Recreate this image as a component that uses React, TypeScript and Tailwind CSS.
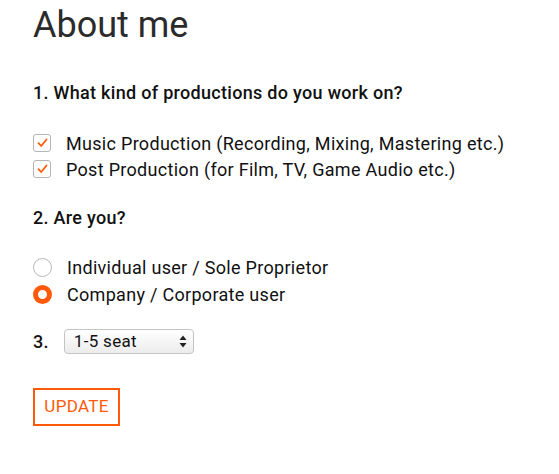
import React from 'react';

const Check: React.FC = () => (
    <span className="flex h-[18px] w-[18px] items-center justify-center rounded-[3px] border border-[#b5b5b5] bg-white">
        <svg width="11" height="10" viewBox="0 0 11 10" fill="none">
            <path d="M1.5 5.2 L4.2 8 L9.5 1.5" stroke="#ff5a0a" strokeWidth="1.8" strokeLinecap="round" strokeLinejoin="round" />
        </svg>
    </span>
);

const Radio: React.FC<{ checked?: boolean }> = ({ checked }) =>
    checked ? (
        <span className="h-[19px] w-[19px] rounded-full border-[5px] border-[#ff5a0a] bg-white" />
    ) : (
        <span className="h-[19px] w-[19px] rounded-full border border-[#b8b8b8] bg-white" />
    );

const App: React.FC = () => {
    return (
        <div className="min-h-[474px] w-[559px] bg-white pl-[33px] pt-[3px] text-[#111] font-['Roboto',sans-serif] tracking-[0.3px]">
            <h1 className="text-[36px] leading-[44px] tracking-normal text-[#2b2b2b]">About me</h1>

            <h2 className="mt-[34px] text-[18px] font-medium leading-[24px]">1. What kind of productions do you work on?</h2>
            <div className="mt-[25px] flex flex-col">
                <label className="flex h-[26px] items-center gap-[15px] text-[18px]">
                    <Check />
                    <span>Music Production (Recording, Mixing, Mastering etc.)</span>
                </label>
                <label className="flex h-[26px] items-center gap-[15px] text-[18px]">
                    <Check />
                    <span>Post Production (for Film, TV, Game Audio etc.)</span>
                </label>
            </div>

            <h2 className="mt-[24px] text-[18px] font-medium leading-[24px]">2. Are you?</h2>
            <div className="mt-[24px] flex flex-col">
                <label className="flex h-[27px] items-center gap-[15px] text-[18px]">
                    <Radio />
                    <span>Individual user / Sole Proprietor</span>
                </label>
                <label className="flex h-[27px] items-center gap-[15px] text-[18px]">
                    <Radio checked />
                    <span>Company / Corporate user</span>
                </label>
            </div>

            <div className="mt-[20px] flex items-center gap-[15px]">
                <span className="text-[18px] font-medium">3.</span>
                <div className="flex h-[25px] w-[130px] items-center justify-between rounded-[4px] border border-[#c4c4c4] bg-gradient-to-b from-white to-[#ececec] pl-[9px] pr-[6px] text-[17px]">
                    <span>1-5 seat</span>
                    <svg width="8" height="13" viewBox="0 0 8 13">
                        <path d="M4 0.5 L7.5 5 L0.5 5 Z" fill="#222" />
                        <path d="M4 12.5 L7.5 8 L0.5 8 Z" fill="#222" />
                    </svg>
                </div>
            </div>

            <button className="mt-[33px] h-[38px] w-[87px] border-2 border-[#ff5a0a] text-[17px] text-[#ff5a0a]">
                UPDATE
            </button>
        </div>
    );
};

export default App;
